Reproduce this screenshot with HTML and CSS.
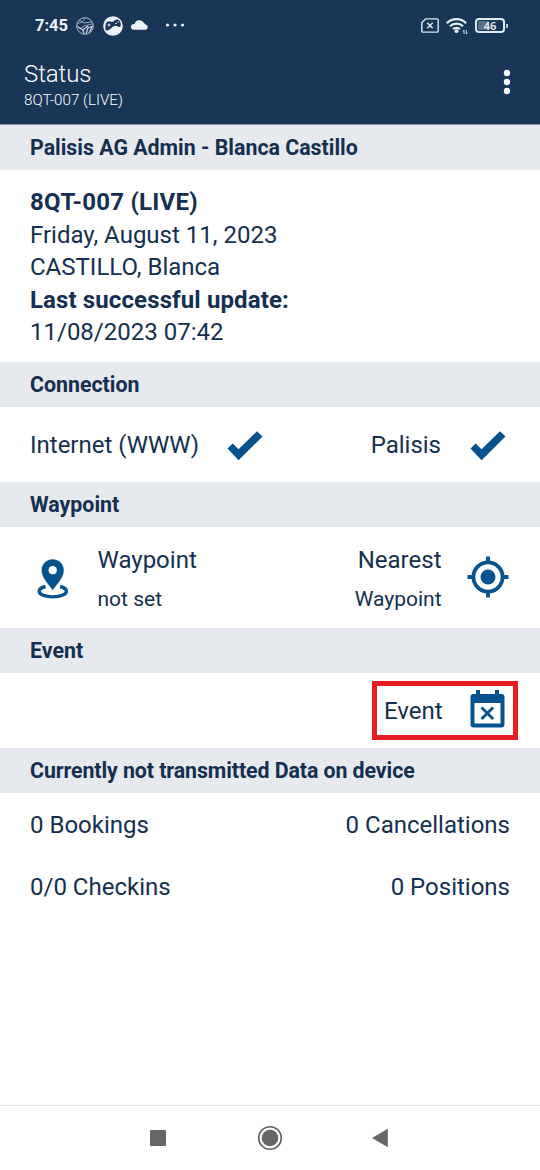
FILE: index.html
```
<!DOCTYPE html>
<html lang="en">
<head>
<meta charset="utf-8">
<title>Status</title>
<link rel="stylesheet" href="styles.css">
</head>
<body>
<div class="screen">
  <header class="header">
    <div class="statusbar">
      <span class="clock">7:45</span>
      <svg class="i-ball" width="20" height="20" viewBox="0 0 20 20" fill="none" stroke="#c9d5e2"><circle cx="10" cy="10" r="8.300" stroke-width=".8"/><path d="M2 7c4 0 6-1 8-5M4 4l5 3 8-1M2 9c1 4 4 4 7 1l8-2" stroke-width=".7"/><path d="M9 18l-1-4-5-3M11 18l2-6 5-2M14 17l3-6M8 14l5-4" stroke-width="1.200"/></svg>
      <svg class="i-game" width="20" height="20" viewBox="0 0 20 20"><circle cx="10" cy="10" r="9.800" fill="#edf3f9"/><path d="M2.700 14.300C1.800 9 3 5.200 6 5.200c1.500 0 2 .8 3.200.7C11.500 5.500 12 3.400 14.500 3.500c2.700.3 3.500 3.500 3.200 6.500-.3 1.200-1.700 1.200-2.700.5-1.500-1-3.200-1-5.200.2-2.300 1.700-4.800 4.800-7.100 3.600z" fill="#193657"/><path d="M4.500 9h3M6 7.500v3" stroke="#edf3f9"/><circle cx="13" cy="7.500" r=".8" fill="#edf3f9"/><circle cx="15.200" cy="6" r=".7" fill="#edf3f9"/></svg>
      <svg class="i-cloud" width="18" height="11" viewBox="0 0 18 11"><path d="M3 10.700a2.900 2.900 0 0 1-.3-5.800h.8A5.200 5.200 0 0 1 13 3.900a4 4 0 0 1 1.500 1.700 2.600 2.600 0 0 1 .3 5.100z" fill="#edf3f9"/></svg>
      <svg class="i-more" width="20" height="4" viewBox="0 0 20 4" fill="#edf3f9"><circle cx="2.500" cy="2" r="1.600"/><circle cx="10" cy="2" r="1.600"/><circle cx="17.500" cy="2" r="1.600"/></svg>
      <svg class="i-sim" width="18" height="15" viewBox="0 0 18 15" fill="none" stroke="#dfe7ef"><path d="M4.700.9H16a1.200 1.200 0 0 1 1.200 1.200v10.800a1.200 1.200 0 0 1-1.200 1.200H2A1.200 1.200 0 0 1 .8 12.900V4.600z" stroke-width="1.400"/><path d="M6.300 4.800l5.400 5.400M11.700 4.800l-5.400 5.400" stroke-width="1.500"/></svg>
      <svg class="i-wifi" width="23" height="18" viewBox="0 0 23 18" fill="none" stroke="#e3ebf3" stroke-width="2.300"><path d="M.9 6.200a13.500 13.500 0 0 1 19.200 0M4 9.300a9.200 9.200 0 0 1 13 0M7.100 12.300a4.800 4.800 0 0 1 6.800 0"/><circle cx="10.500" cy="14.200" r="1.900" fill="#e3ebf3" stroke="none"/><path d="M18 13v4M20.300 13v4M17 14.500l1-1.500M21.300 15.500l-1 1.500" stroke-width=".9"/></svg>
      <span class="battery"><span class="level"></span><span class="percent">46</span></span><span class="tip"></span>
    </div>
    <div class="titlebar">
      <div><div class="title">Status</div><div class="subtitle">8QT-007 (LIVE)</div></div>
      <svg class="menu" width="8" height="26" viewBox="0 0 8 26" fill="#fff"><circle cx="4" cy="4" r="3.200"/><circle cx="4" cy="13" r="3.200"/><circle cx="4" cy="22" r="3.200"/></svg>
    </div>
  </header>
  <main class="content">
    <h2 class="bar">Palisis AG Admin - Blanca Castillo</h2>
    <section class="info">
      <strong class="device">8QT-007 (LIVE)</strong>
      <span>Friday, August 11, 2023</span>
      <span>CASTILLO, Blanca</span>
      <strong class="update">Last successful update:</strong>
      <span>11/08/2023 07:42</span>
    </section>
    <h2 class="bar">Connection</h2>
    <section class="row connection">
      <span>Internet (WWW)</span>
      <svg class="check" width="36" height="30" viewBox="0 0 36 30"><path d="M.5 17.500L5.700 12.500 11.500 18.200 30 .3 35.500 5.600 11.600 29.200z" fill="#06528f"/></svg>
      <span class="push">Palisis</span>
      <svg class="check" width="36" height="30" viewBox="0 0 36 30"><path d="M.5 17.500L5.700 12.500 11.500 18.200 30 .3 35.500 5.600 11.600 29.200z" fill="#06528f"/></svg>
    </section>
    <h2 class="bar">Waypoint</h2>
    <section class="row waypoint">
      <svg class="pin" width="32" height="41" viewBox="0 0 32 41"><path d="M8.500 27.500C4.500 28.500 2.200 30.200 2.200 32.200c0 3.300 6 5.700 13.500 5.700s13.700-2.400 13.700-5.700c0-2-2.400-3.700-6.300-4.700" fill="none" stroke="#06528f" stroke-width="3.400"/><path d="M15.700 0C9.300 0 4.300 5 4.300 11.300c0 7.800 8 15.200 11.400 20.200 3.400-5 11.400-12.400 11.400-20.200C27.100 5 22.100 0 15.700 0zm0 7.300a3.900 3.900 0 1 1 0 7.800 3.900 3.900 0 0 1 0-7.800z" fill="#06528f" fill-rule="evenodd" stroke="#fff" stroke-width=".6"/></svg>
      <div class="pair"><span>Waypoint</span><span class="small">not set</span></div>
      <div class="pair right"><span>Nearest</span><span class="small">Waypoint</span></div>
      <svg class="target" width="42" height="42" viewBox="0 0 42 42"><g stroke="#06528f" fill="none"><circle cx="21" cy="21" r="14.600" stroke-width="3.800"/><path d="M21 .5v6M21 35.500v6M.5 21h6M35.500 21h6" stroke-width="3.800"/></g><circle cx="21" cy="21" r="7.500" fill="#06528f"/></svg>
    </section>
    <h2 class="bar">Event</h2>
    <section class="row event-row">
      <div class="event"><span>Event</span>
      <svg width="35" height="38" viewBox="0 0 35 38"><path d="M6 0h4v4h15V0h4v4h2.500A3 3 0 0 1 34.500 7v27.500a3 3 0 0 1-3 3h-28a3 3 0 0 1-3-3V7a3 3 0 0 1 3-3H6zM4.500 13v20.500h26V13z" fill="#06528f" fill-rule="evenodd"/><path d="M11.500 17.500l11.600 11.600M23.100 17.500l-11.600 11.600" stroke="#06528f" stroke-width="2.800"/></svg></div>
    </section>
    <h2 class="bar long">Currently not transmitted Data on device</h2>
    <section class="totals">
      <span>0 Bookings</span><span>0 Cancellations</span>
      <span>0/0 Checkins</span><span>0 Positions</span>
    </section>
  </main>
  <nav class="nav">
    <svg width="16" height="16" viewBox="0 0 16 16"><rect width="16" height="16" rx=".5" fill="#666"/></svg>
    <svg class="home" width="26" height="26" viewBox="0 0 26 26"><circle cx="13" cy="13" r="11.300" fill="none" stroke="#606060" stroke-width="1.600"/><circle cx="13" cy="13" r="8.300" fill="#666"/></svg>
    <svg width="16" height="18" viewBox="0 0 16 18"><path d="M.5 9L15.500.3v17.400z" fill="#666" stroke="#666" stroke-width=".6" stroke-linejoin="round"/></svg>
  </nav>
</div>
</body>
</html>
```
FILE: styles.css
```
* { box-sizing: border-box; }
body { margin: 0; background: #fff; color: #142f50; font-family: Roboto, sans-serif; font-size: 24px; }
svg { display: block; flex: none; }
.screen { width: 540px; height: 1170px; display: flex; flex-direction: column; overflow: hidden; white-space: nowrap; }
.header { height: 125px; flex: none; background: #193657; color: #fff; border-bottom: 1px solid #8594a7; }
.statusbar { height: 50px; display: flex; align-items: center; padding: 1px 32px 0 35px; }
.clock { font-size: 16.500px; font-weight: 700; color: #edf3f9; width: 40px; line-height: 20px; padding-top: 1px; }
.i-ball { margin-top: 1px; }
.i-game { margin-left: 8px; }
.i-cloud { margin-left: 8px; margin-top: -2px; }
.i-more { margin-left: 16px; margin-top: -1px; }
.i-sim { margin-left: auto; }
.i-wifi { margin-left: 7px; }
.battery { position: relative; margin-left: 6px; width: 30px; height: 15px; border: 2px solid #dfe7ef; border-radius: 4px; display: flex; align-items: center; justify-content: center; }
.level { position: absolute; left: 1px; top: 1px; bottom: 1px; width: 11px; background: #587089; border-radius: 1px; }
.percent { position: relative; font-family: "Noto Sans", sans-serif; font-size: 11px; font-weight: 600; line-height: 11px; color: #edf3f9; }
.tip { width: 2px; height: 4px; margin-left: 1px; background: #b5c2cf; }
.titlebar { display: flex; justify-content: space-between; padding: 9px 29px 0 24px; font-weight: 300; }
.title { font-size: 24px; line-height: 30px; letter-spacing: -.1px; }
.subtitle { font-size: 15.200px; line-height: 22px; }
.menu { margin-top: 10px; }
.content { flex: 1; }
.bar { height: 45px; margin: 0; padding-left: 30px; background: #e6e9ee; font-size: 21.350px; line-height: 45px; font-weight: 700; }
.bar.long { letter-spacing: -.08px; }
.info { height: 192px; padding: 16px 30px; display: flex; flex-direction: column; line-height: 32.500px; }
.device { letter-spacing: .25px; }
.update { letter-spacing: .12px; }
.row { display: flex; align-items: center; padding: 0 30px; }
.connection { height: 75px; padding-right: 34px; }
.connection span { padding-top: 1px; }
.connection .check { margin-left: 28px; margin-top: 2px; }
.connection .push { margin-left: auto; margin-right: 1px; }
.waypoint { height: 101px; }
.pin { margin-left: 7px; margin-top: 3px; }
.pair { display: flex; flex-direction: column; line-height: 39px; margin-left: 28.500px; padding-top: 4px; }
.small { font-size: 21px; }
.right { margin-left: auto; text-align: right; }
.target { margin-left: 25px; margin-right: 1.500px; margin-top: -1px; }
.event-row { height: 75px; justify-content: flex-end; padding-right: 22px; }
.event { width: 146px; height: 59px; border: 5px solid #e81c24; display: flex; align-items: center; justify-content: space-between; padding: 0 8px 4px 7px; }
.event span { padding-top: 4px; }
.totals { display: grid; grid-template-columns: 1fr 1fr; grid-template-rows: 63px 62px; align-items: center; padding: 0 30px; }
.totals span:nth-child(even) { text-align: right; }
.nav { height: 65px; flex: none; border-top: 1px solid #e9e9e9; display: flex; align-items: center; justify-content: space-between; padding: 0 152px 1px 150px; }
.home { margin-left: 1px; }
```
